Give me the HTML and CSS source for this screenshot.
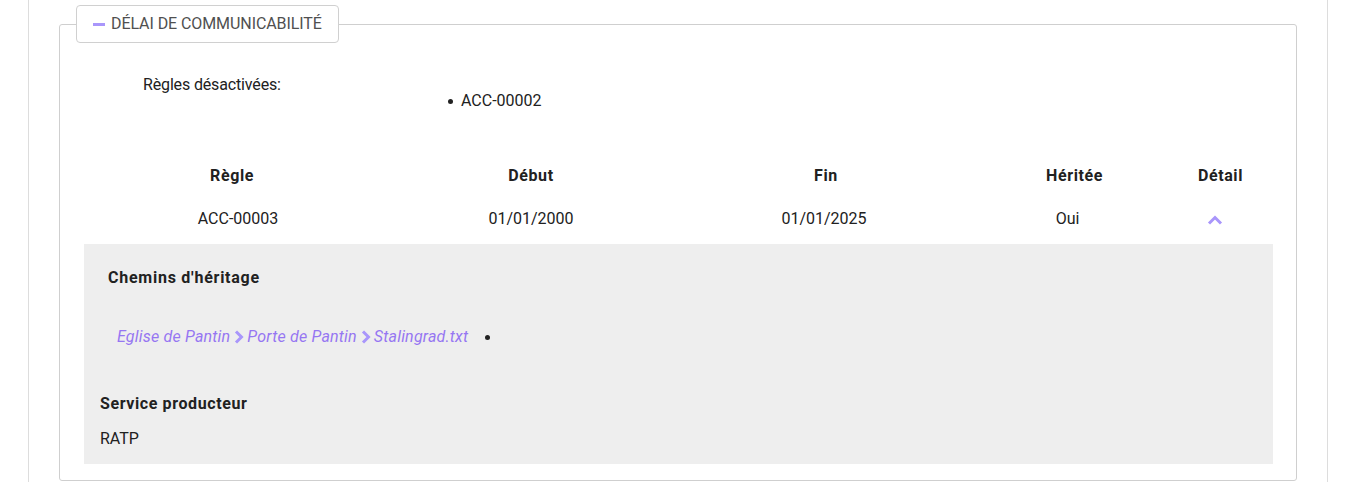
FILE: index.html
```html
<!DOCTYPE html>
<html lang="fr">
<head>
<meta charset="utf-8">
<title>Délai de communicabilité</title>
<link rel="stylesheet" href="styles.css">
</head>
<body>
<div class="page">
  <fieldset class="card">
    <legend class="card-legend">
      <span class="minus"></span>
      <span class="legend-text">DÉLAI DE COMMUNICABILITÉ</span>
    </legend>
    <div class="card-body">
      <div class="disabled-rules">
        <div class="dr-label">Règles désactivées:</div>
        <ul class="dr-list">
          <li>ACC-00002</li>
        </ul>
      </div>

      <div class="rules-table">
        <div class="th th-1">Règle</div>
        <div class="th th-2">Début</div>
        <div class="th th-3">Fin</div>
        <div class="th th-4">Héritée</div>
        <div class="th th-5">Détail</div>

        <div class="td">ACC-00003</div>
        <div class="td">01/01/2000</div>
        <div class="td">01/01/2025</div>
        <div class="td">Oui</div>
        <div class="td td-icon">
          <svg class="chev-up" width="16" height="10" viewBox="0 0 16 10"><path d="M2 8.5 L8 2.5 L14 8.5" fill="none" stroke="#a996fb" stroke-width="3"/></svg>
        </div>
      </div>

      <div class="detail">
        <div class="detail-title">Chemins d'héritage</div>
        <div class="path-row">
          <span class="path">
            <a class="crumb">Eglise de Pantin</a><svg class="chev-right" width="12" height="14" viewBox="0 0 12 14"><path d="M3 1.5 L8.5 7 L3 12.5" fill="none" stroke="#a996fb" stroke-width="3"/></svg><a class="crumb">Porte de Pantin</a><svg class="chev-right" width="12" height="14" viewBox="0 0 12 14"><path d="M3 1.5 L8.5 7 L3 12.5" fill="none" stroke="#a996fb" stroke-width="3"/></svg><a class="crumb">Stalingrad.txt</a>
          </span>
          <span class="dot"></span>
        </div>
        <div class="service-title">Service producteur</div>
        <div class="service-value">RATP</div>
      </div>
    </div>
  </fieldset>
</div>
</body>
</html>
```

FILE: styles.css
```css
html, body {
  margin: 0;
  padding: 0;
  background: #ffffff;
}
body {
  font-family: Roboto, "Liberation Sans", Arial, sans-serif;
  font-size: 16px;
  line-height: 20px;
  color: #212121;
}
.page {
  box-sizing: border-box;
  width: 1300px;
  margin-left: 28px;
  height: 482px;
  padding: 5px 30px 0;
  border-left: 1px solid #dddddd;
  border-right: 1px solid #dddddd;
}
.card {
  box-sizing: border-box;
  width: 1238px;
  margin: 0;
  padding: 0 16px 16px;
  border: 1px solid #cfcfcf;
  border-radius: 3px;
  min-inline-size: 0;
}
.card-legend {
  display: flex;
  align-items: center;
  gap: 6px;
  padding: 8px 16px 8px 16px;
  border: 1px solid #d0d0d0;
  border-radius: 4px;
  background: #ffffff;
}
.minus {
  display: block;
  width: 12px;
  height: 3px;
  background: #a996fb;
}
.legend-text {
  color: #505050;
  letter-spacing: -0.08px;
}
.card-body {
  margin: 0 7px 0 8px;
}
.disabled-rules {
  display: grid;
  grid-template-columns: 337px 1fr;
  margin-top: 32px;
}
.dr-label {
  padding-left: 59px;
  letter-spacing: -0.15px;
}
.dr-list {
  margin: 16px 0 16px;
  padding-left: 40px;
  list-style: none;
}
.dr-list li {
  position: relative;
}
.dr-list li::before {
  content: "";
  position: absolute;
  left: -13px;
  top: 8px;
  width: 5px;
  height: 5px;
  border-radius: 50%;
  background: #222222;
}
.rules-table {
  display: grid;
  grid-template-columns: 308px 278px 308px 179px 115px;
  margin-top: 29px;
}
.th {
  text-align: center;
  font-weight: 700;
  letter-spacing: 0.6px;
  padding: 10px 0;
}
.th-1 { padding-right: 12px; }
.th-3 { padding-left: 4px; }
.th-4 { padding-left: 14px; }
.th-5 { padding-left: 12px; }
.td {
  text-align: center;
  padding: 13px 0 15px;
}
.td-icon {
  display: flex;
  justify-content: center;
  align-items: center;
}
.chev-up {
  display: block;
  margin-top: 2px;
}
.detail {
  background: #eeeeee;
  padding: 24px 16px 15px;
}
.detail-title {
  font-weight: 700;
  letter-spacing: 0.75px;
  margin-left: 8px;
}
.path-row {
  display: flex;
  align-items: center;
  margin-top: 39px;
  margin-left: 17px;
}
.path {
  display: flex;
  align-items: center;
  font-style: italic;
}
.crumb {
  color: #9676f2;
  letter-spacing: 0.2px;
}
.chev-right {
  display: block;
  margin: 0 2px 0 3px;
}
.dot {
  display: block;
  width: 5px;
  height: 5px;
  border-radius: 50%;
  background: #222222;
  margin-left: 17px;
}
.service-title {
  font-weight: 700;
  letter-spacing: 0.6px;
  margin-top: 47px;
}
.service-value {
  margin-top: 15px;
}
```
